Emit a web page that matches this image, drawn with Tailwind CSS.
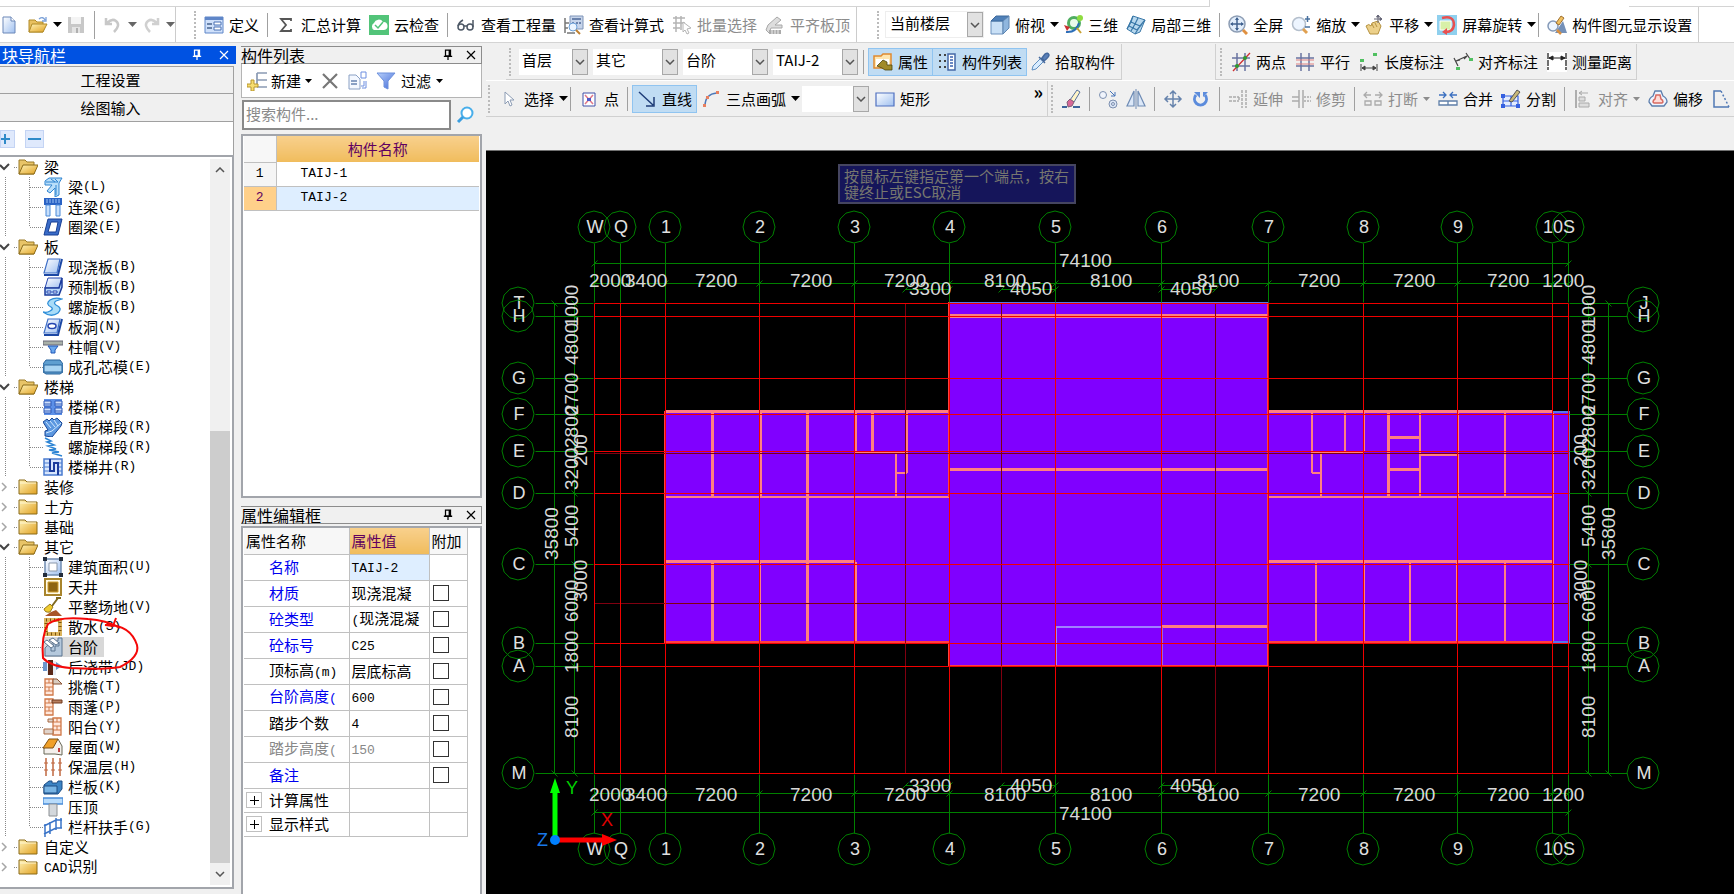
<!DOCTYPE html>
<html lang="zh-CN">

<head>
    <meta charset="UTF-8">
    <meta name="viewport" content="width=device-width, initial-scale=1.0">
    <title>绘图输入</title>
    <script src="https://cdn.jsdelivr.net/npm/@tailwindcss/browser@4"></script>
</head>

<body class="h-screen flex flex-col overflow-hidden bg-[#f0f0f0] text-black text-[15px] leading-5 font-['Noto_Sans_CJK_SC',sans-serif]">
    <!-- 图标 -->
    <svg class="absolute size-0">
        <defs>
            <linearGradient id="gy" x1="0" y1="0" x2="1" y2="1"><stop offset="0" stop-color="#fff3b8" /><stop offset="1" stop-color="#e0a020" /></linearGradient>
            <linearGradient id="gb" x1="0" y1="0" x2="1" y2="1"><stop offset="0" stop-color="#ffffff" /><stop offset="1" stop-color="#9fc0f0" /></linearGradient>
            <linearGradient id="gf" x1="0" y1="0" x2="1" y2="1"><stop offset="0" stop-color="#b8d0fa" /><stop offset="1" stop-color="#3f68d8" /></linearGradient>
        </defs>
        <symbol id="caret" viewBox="0 0 9 5"><path d="M0 0h9L4.500 5z" fill="currentColor" /></symbol>
        <symbol id="down" viewBox="0 0 10 6"><path d="M1 1l4 4 4-4" fill="none" stroke="#555" stroke-width="1.500" /></symbol>
        <symbol id="pin" viewBox="0 0 12 14"><path d="M3 1h6v7H3zM7.500 1v7M1 8.500h10M6 9v4" fill="none" stroke="currentColor" stroke-width="1.500" /></symbol>
        <symbol id="close" viewBox="0 0 10 10"><path d="M1 1l8 8M9 1l-8 8" fill="none" stroke="currentColor" stroke-width="1.200" /></symbol>
        <symbol id="new" viewBox="0 0 20 20"><path d="M3 2h8l4 4v12H3z" fill="url(#gb)" stroke="#6a87b8" /><path d="M11 2v4h4" fill="#fff" stroke="#6a87b8" /></symbol>
        <symbol id="open" viewBox="0 0 20 20"><path d="M1 5h6l2 2h6v10H1z" fill="#e8c060" stroke="#b08a28" /><path d="M4 9h15l-4 8H1z" fill="url(#gy)" stroke="#b08a28" /><path d="M11 4q4-3 6 1M18 2v4h-4" fill="none" stroke="#7aa0d8" stroke-width="1.300" /></symbol>
        <symbol id="save" viewBox="0 0 20 20"><path d="M2 2h16v16H2z" fill="#c8c8c8" /><path d="M5 2h10v7H5z" fill="#f4f4f4" /><path d="M6 12h8v6H6z" fill="#e4e4e4" /><path d="M10 13h2v5h-2z" fill="#b0b0b0" /></symbol>
        <symbol id="undo" viewBox="0 0 20 20"><path d="M3 3v6h6M4 8q5-5 9-2 5 4-2 11" fill="none" stroke="#c8c8c8" stroke-width="2.500" /></symbol>
        <symbol id="redo" viewBox="0 0 20 20"><path d="M17 3v6h-6M16 8q-5-5-9-2-5 4 2 11" fill="none" stroke="#d0d0d0" stroke-width="2.500" /></symbol>
        <symbol id="define" viewBox="0 0 20 20"><path d="M1 2h18v16H1z" fill="#cfe0fa" stroke="#5f86c8" /><path d="M1 2h18v3H1z" fill="#5f86c8" /><path d="M3 9h5M3 13h5" stroke="#47638f" stroke-width="1.500" /><path d="M10 7h7v3h-7zM10 12h7v3h-7z" fill="#fff" stroke="#4871b4" /></symbol>
        <symbol id="sum" viewBox="0 0 20 20"><path d="M15 6V4H5l5 6-5 6h10v-2" fill="none" stroke="#555" stroke-width="1.800" /></symbol>
        <symbol id="cloud" viewBox="0 0 20 20"><path d="M0 0h20v20H0z" fill="#52c479" /><path d="M5 15a4 4 0 0 1 0-7 5 5 0 0 1 9-1 4 4 0 0 1 1 8z" fill="#fff" /><path d="M6 10l3 3 5-6" fill="none" stroke="#52c479" stroke-width="1.500" /></symbol>
        <symbol id="glasses" viewBox="0 0 20 20"><g fill="#fff" stroke="#4d5866" stroke-width="1.500"><circle cx="5" cy="12" r="3" /><circle cx="14" cy="12" r="3" /><path d="M8 11h3M2 11q1-4 5-6M17 12V5" fill="none" /></g></symbol>
        <symbol id="calc" viewBox="0 0 20 20"><path d="M6 1h13v13H6z" fill="#c6d4ea" stroke="#7f94b8" /><path d="M8 3h9v2H8zM8 7h2v2H8zM12 7h2v2h-2zM15 7h2v2h-2z" fill="#6a82ac" /><path d="M1 3v15M1 8h4M1 13h3M3 18h8" stroke="#777" stroke-width="1.500" /><circle cx="9" cy="12" r="4" fill="#eaf4ff" stroke="#6a9fd8" /><path d="M12 15l4 4" stroke="#c08030" stroke-width="2" /></symbol>
        <symbol id="batch" viewBox="0 0 20 20"><path d="M1 3h12M1 8h12M1 13h7M4 1v16M9 1v14" stroke="#b4b4b4" stroke-width="1.500" fill="none" /><path d="M11 7l8 6-4 1 2 4-2 1-2-4-2 2z" fill="#fff" stroke="#b4b4b4" /></symbol>
        <symbol id="align" viewBox="0 0 20 20"><path d="M3 10l9-8 4 3-6 5h7v3H6l-2 5-3-3z" fill="#ddd" stroke="#a8a8a8" /><path d="M4 15h12v4H4z" fill="#aaa" /><path d="M7 15v4M10 15v4M13 15v4" stroke="#eee" /></symbol>
        <symbol id="cube" viewBox="0 0 20 20"><path d="M1 6h12v13H1z" fill="#c9e0f6" stroke="#6a90bc" /><path d="M1 6l5-5h13l-6 5z" fill="#4f80b8" stroke="#3f6a9c" /><path d="M13 6l6-5v12l-6 6z" fill="#8fb6de" stroke="#5c84b0" /></symbol>
        <symbol id="orbit" viewBox="0 0 20 20"><circle cx="11" cy="8" r="7" fill="#4fae60" /><circle cx="11" cy="8" r="4" fill="#eafbea" /><path d="M1 10l6 2-3 4z" fill="#c83030" /><path d="M3 17q10 1 13-9" fill="none" stroke="#2c6eb8" stroke-width="2" /><path d="M14 13l4 5" stroke="#c8a030" stroke-width="2" /><circle cx="17" cy="3" r="3" fill="#8fdc40" /></symbol>
        <symbol id="local" viewBox="0 0 20 20"><path d="M7 1l12 4-5 12-5 2-8-5z" fill="#b8d8ee" stroke="#3a78a8" /><path d="M7 1L5 7l9 4 5-6M14 11l-5 8M5 7l-4 7M12 3L9 9l-4 7M3 11l8 4 5-6" fill="none" stroke="#3a78a8" stroke-width="1.200" /></symbol>
        <symbol id="full" viewBox="0 0 20 20"><circle cx="9" cy="9" r="8" fill="#e2eefc" stroke="#8d9db4" stroke-width="1.500" /><path d="M9 3v12M3 9h12" stroke="#41628f" stroke-width="1.500" /><path d="M9 2l2 3H7zM9 16l2-3H7zM2 9l3-2v4zM16 9l-3-2v4z" fill="#41628f" /><path d="M15 15l4 4" stroke="#e09040" stroke-width="3" /></symbol>
        <symbol id="zoom" viewBox="0 0 20 20"><circle cx="8" cy="9" r="6.500" fill="#edf5ff" stroke="#b4bfcc" stroke-width="1.500" /><path d="M12 14l4 4" stroke="#e0a050" stroke-width="3" /><path d="M14 4h5M16.500 1v6M14 12h5" stroke="#47709f" stroke-width="1.500" /></symbol>
        <symbol id="pan" viewBox="0 0 20 20"><path d="M2 11q3-3 5 0l1-3 6-2 3 5-3 8H6z" fill="#ecd08a" stroke="#b59240" /><path d="M8 9l2 4M11 8l2 4" stroke="#b59240" /><path d="M14 0v8M10 4h8M14 0l-1.500 2h3zM18 4l-2-1.500v3z" stroke="#667" fill="#667" /></symbol>
        <symbol id="spin" viewBox="0 0 20 20"><path d="M0 0h20v20H0z" fill="#8fd0ee" /><path d="M3 6h11v9H3z" fill="#d8f0a8" stroke="#fff" /><path d="M5 3q12-3 12 7-1 7-8 7" fill="none" stroke="#e85050" stroke-width="2.500" /><path d="M10 13v7l-5-3z" fill="#e85050" /></symbol>
        <symbol id="display" viewBox="0 0 20 20"><path d="M8 18l8-12 4 12z" fill="#7490b8" /><circle cx="6" cy="11" r="5" fill="#eef6ff" stroke="#8499b8" stroke-width="1.500" /><path d="M9 8l5-7 3 2-5 7z" fill="#f0c060" stroke="#a07030" /><path d="M10 15l4 4" stroke="#d89040" stroke-width="2.500" /></symbol>
        <symbol id="prop" viewBox="0 0 20 20"><path d="M1 4h7l2-2h8v14H1z" fill="#ffe6b0" stroke="#e08a30" stroke-width="1.500" /><path d="M3 7h13v7H3z" fill="#fff" /><path d="M4 14l6-6 4 2v3h5v5h-7l-3-2z" fill="#a08a28" stroke="#4c4410" stroke-width=".8" /></symbol>
        <symbol id="list" viewBox="0 0 20 20"><path d="M2 3h3M2 9h3M2 15h3M7 3h2M7 9h2M7 15h2" stroke="#444" stroke-width="2" stroke-dasharray="2 1" /><path d="M11 2h7v16h-7z" fill="#fff" stroke="#4468a8" stroke-width="1.500" /><path d="M13 5h3M13 8h3M13 11h3M13 14h3" stroke="#3a62b0" stroke-width="1.500" /></symbol>
        <symbol id="pick" viewBox="0 0 20 20"><path d="M2 18l1-4 8-8 3 3-8 8z" fill="#d8ecff" stroke="#5f8fc0" /><path d="M9 5l6 6M12 6l3-4q3-2 4 1 0 2-5 6z" fill="#5b80b8" stroke="#44689c" stroke-width="1.500" /></symbol>
        <symbol id="cursor" viewBox="0 0 20 20"><path d="M6 3v12l3-3 2 5 2-1-2-5h4z" fill="#fff" stroke="#8c9cb4" /></symbol>
        <symbol id="point" viewBox="0 0 20 20"><path d="M4 4h12v13H4z" fill="#fff" stroke="#4050a8" /><path d="M6 6l8 9M14 6l-8 9" stroke="#e07888" stroke-width="1.500" /><path d="M8 9h4v3H8z" fill="#5058c8" /></symbol>
        <symbol id="line" viewBox="0 0 20 20"><path d="M2 3l14 13M17 8v9H9" fill="none" stroke="#1f3d78" stroke-width="1.500" /></symbol>
        <symbol id="arc" viewBox="0 0 20 20"><path d="M4 17Q4 5 16 4" fill="none" stroke="#4c78b8" stroke-width="1.500" /><path d="M2 15h3v3H2zM5 7h3v3H5zM15 2h3v3h-3z" fill="#e88060" /></symbol>
        <symbol id="rect" viewBox="0 0 20 20"><path d="M1 4h18v13H1z" fill="url(#gb)" stroke="#4f70c0" stroke-width="1.200" /></symbol>
        <symbol id="twopt" viewBox="0 0 20 20"><path d="M6 1v18M14 1v18M1 6h18M1 14h18" stroke="#6873a0" stroke-width="1.500" /><path d="M2 19L19 1" stroke="#d03030" stroke-width="1.300" /><circle cx="6" cy="14" r="2" fill="#2e9a30" /><circle cx="14" cy="6" r="2" fill="#2e9a30" /></symbol>
        <symbol id="parallel" viewBox="0 0 20 20"><path d="M6 1v18M14 1v18M1 6h18M1 14h18" stroke="#6873a0" stroke-width="1.500" /><path d="M1 8h18M1 12h18" stroke="#e08080" stroke-width="1" /></symbol>
        <symbol id="length" viewBox="0 0 20 20"><path d="M2 12v7M18 12v7M3 16h14M3 16l3-2v4zM17 16l-3-2v4z" stroke="#444" fill="#444" /><path d="M1 7h4v3H1zM14 1h4v3h-4z" fill="#50c060" /></symbol>
        <symbol id="aligned" viewBox="0 0 20 20"><path d="M1 6l4 8M13 1l4 6M3 9l11-5M3 9l4-1M14 4l-3 3" stroke="#444" stroke-width="1.200" fill="none" /><path d="M3 15h4v3H3zM16 6h4v3h-4z" fill="#50c060" /></symbol>
        <symbol id="measure" viewBox="0 0 20 20"><path d="M0 0h20v20H0z" fill="#fff" /><path d="M1 1v17M19 1v17" stroke="#222" stroke-width="1.300" stroke-dasharray="6 1" /><path d="M2 6h16M2 6l4-2v4zM18 6l-4-2v4z" stroke="#222" fill="#222" /></symbol>
        <symbol id="brush" viewBox="0 0 20 20"><path d="M9 11l7-10 3 2-6 10z" fill="#fff4c8" stroke="#56719e" /><path d="M6 13l3-3 4 3-2 4-4 1z" fill="#d86898" stroke="#806078" /><path d="M1 18h5M12 18h7" stroke="#3b649c" stroke-width="2" /></symbol>
        <symbol id="copy" viewBox="0 0 20 20"><circle cx="5" cy="6" r="3.500" fill="#f0f4fc" stroke="#7d90b0" /><circle cx="15" cy="15" r="4" fill="#dce6f6" stroke="#7d90b0" /><circle cx="15" cy="15" r="1.500" fill="none" stroke="#7d90b0" /><path d="M12 2l5 5M17 3v4h-4" fill="none" stroke="#4472b8" /></symbol>
        <symbol id="mirror" viewBox="0 0 20 20"><path d="M8 2v15H1zM12 2v15h7z" fill="#dce8f8" stroke="#6e8bb4" stroke-width="1.200" /><path d="M10 0v20" stroke="#6e8bb4" /></symbol>
        <symbol id="move" viewBox="0 0 20 20"><path d="M10 3v14M3 10h14M7 5l3-3 3 3M7 15l3 3 3-3M5 7l-3 3 3 3M15 7l3 3-3 3" fill="none" stroke="#6683ac" stroke-width="1.500" /></symbol>
        <symbol id="rotate" viewBox="0 0 20 20"><path d="M5 6a6 6 0 1 0 9 0" fill="none" stroke="#5c8cdc" stroke-width="3" /><path d="M3 3h6v6zM12 8V3h5z" fill="#5c8cdc" /></symbol>
        <symbol id="extend" viewBox="0 0 20 20"><path d="M1 8h10M1 12h10M11 8v4M14 1v18M18 1v18" stroke="#aaa" stroke-width="1.500" stroke-dasharray="3 1" /></symbol>
        <symbol id="trim" viewBox="0 0 20 20"><path d="M1 8h7M1 12h7M8 1v18M12 1v18" stroke="#aaa" stroke-width="1.500" /><path d="M13 8h7M13 12h7" stroke="#aaa" stroke-width="1.500" stroke-dasharray="2 1" /></symbol>
        <symbol id="break" viewBox="0 0 20 20"><path d="M1 6h7M12 6h7M4 3L1 6l3 3M16 3l3 3-3 3M2 12h6v4H2zM12 12h6v4h-6z" fill="none" stroke="#aaa" stroke-width="1.300" /></symbol>
        <symbol id="merge" viewBox="0 0 20 20"><path d="M1 6h7M12 6h7M5 3l3 3-3 3M15 3l-3 3 3 3" fill="none" stroke="#3c70c0" stroke-width="1.300" /><path d="M1 12h18v4H1zM10 12v4" fill="#fff" stroke="#5d7ea8" stroke-width="1.300" /></symbol>
        <symbol id="split" viewBox="0 0 20 20"><path d="M2 7h15v10H2zM10 7v10M2 12h15" fill="#e4edff" stroke="#3560e0" stroke-width="1.200" /><path d="M0 5h4v4H0zM0 15h4v4H0zM15 15h4v4h-4z" fill="#3560e0" /><path d="M8 12l8-11 3 2-8 10z" fill="#c8b878" stroke="#555" /></symbol>
        <symbol id="justify" viewBox="0 0 20 20"><path d="M3 1v18" stroke="#999" stroke-width="1.500" /><path d="M6 8h6v4H6zM6 14h10v4H6zM6 4h9M9 2L6 4l3 2" fill="#ddd" stroke="#aaa" /></symbol>
        <symbol id="offset" viewBox="0 0 20 20"><path d="M7 2h6l2 5q4 2 4 6l-3 4H4l-3-4q0-4 4-6z" fill="#eef4ff" stroke="#5b7dac" stroke-width="1.300" /><path d="M8 6h4l1 4q2 1 2 3l-1 1H6l-1-1q0-2 2-3z" fill="#ffdcd8" stroke="#d86a60" stroke-width="1.500" /></symbol>
        <symbol id="stretch" viewBox="0 0 20 20"><path d="M10 2H3v16h15" fill="none" stroke="#5078b4" stroke-width="1.500" /><path d="M10 2l8 16" stroke="#5078b4" stroke-dasharray="2 2" stroke-width="1.500" /></symbol>
        <symbol id="add" viewBox="0 0 20 20"><path d="M10 2h10M10 9h10M10 16h10M10 2v14" stroke="#8a9ab4" stroke-width="1.700" fill="none" /><path d="M4 9h3v4h4v3H7v4H4v-4H0v-3h4z" fill="#f6dc70" stroke="#b8962c" /></symbol>
        <symbol id="del" viewBox="0 0 20 20"><path d="M3 3l14 14M17 3L3 17" stroke="#777" stroke-width="2.200" /></symbol>
        <symbol id="dup" viewBox="0 0 20 20"><path d="M1 4h7l4 4v10H1z" fill="#f4f8ff" stroke="#8aa0c4" /><path d="M3 10h6M3 13h6" stroke="#8aa0c4" stroke-width="2" /><path d="M13 1h5v6h-5zM16 10v5h-3M18 10v7h-4" fill="none" stroke="#6d8ee0" /></symbol>
        <symbol id="filter" viewBox="0 0 20 20"><path d="M1 2h18l-7 8v8l-4-2v-6z" fill="url(#gf)" stroke="#6c90dc" /></symbol>
        <symbol id="search" viewBox="0 0 20 20"><circle cx="11" cy="8" r="5.500" fill="#fff" stroke="#48aeea" stroke-width="2" /><path d="M7 12l-5 5" stroke="#3a9ee0" stroke-width="3" /></symbol>
        <!-- 构件树图标 -->
        <symbol id="t-open" viewBox="0 0 20 18"><path d="M1 2h6l2 2h7v12H1z" fill="#e8c468" stroke="#9a7a28" /><path d="M5 7h15l-4 9H1z" fill="url(#gy)" stroke="#8a6a18" /></symbol>
        <symbol id="t-dir" viewBox="0 0 20 18"><path d="M1 2h6l2 2h10v12H1z" fill="url(#gy)" stroke="#8a6a18" /><path d="M2 5h16" stroke="#fff6d0" /></symbol>
        <symbol id="t-beam" viewBox="0 0 20 20"><path d="M2 4l4-3h13l-3 5v12l-4 2v-9l-5 5-3-2 5-6H2z" fill="#b8defa" stroke="#2f84d0" /><path d="M3 5h12M8 2l4 3M12 2l3 3M13 8v10" stroke="#2f84d0" /></symbol>
        <symbol id="t-link" viewBox="0 0 20 20"><path d="M1 1h18v7H1z" fill="#2a62c4" /><path d="M3 3h14M3 5h14" stroke="#9cc4f6" stroke-dasharray="2 1" /><path d="M3 8h4v11H3zM13 8h4v11h-4z" fill="#c8e0fc" stroke="#4b8ad8" /></symbol>
        <symbol id="t-ring" viewBox="0 0 20 20"><path d="M5 2h14l-4 16H1z" fill="#3a6cc8" stroke="#173f94" /><path d="M8 5h7l-2 10H5z" fill="#fff" stroke="#173f94" /></symbol>
        <symbol id="t-slab" viewBox="0 0 20 20"><path d="M5 2h12l-3 14H1z" fill="url(#gb)" stroke="#3f70c8" stroke-width="1.200" /><path d="M1 18h14l4-16" stroke="#1c48a4" stroke-width="2" fill="none" /></symbol>
        <symbol id="t-pre" viewBox="0 0 20 20"><path d="M5 1h14l-3 10H2z" fill="url(#gb)" stroke="#2546b0" /><path d="M2 11h14l3-10v9l-3 8H2z" fill="#b8d8fa" stroke="#1c3c9c" stroke-width="1.500" /><path d="M4 14h4v2H4zM10 14h4v2h-4z" fill="#fff" stroke="#2546b0" /></symbol>
        <symbol id="t-spiral" viewBox="0 0 20 20"><path d="M19 2Q12 0 7 3q-5 4 1 7 3 2-1 4-3 2-7 1 8 6 15 1 5-5-2-8-3-2 0-4z" fill="#a8dcf8" stroke="#2f8ed8" stroke-width="1.300" /></symbol>
        <symbol id="t-hole" viewBox="0 0 20 20"><path d="M5 2h12l-3 14H1z" fill="url(#gb)" stroke="#3f70c8" stroke-width="1.200" /><path d="M1 18h14l4-16" stroke="#1c48a4" stroke-width="2" fill="none" /><ellipse cx="9" cy="9" rx="4" ry="2.500" fill="#fff" stroke="#2546b0" stroke-width="1.500" /></symbol>
        <symbol id="t-cap" viewBox="0 0 20 20"><path d="M0 4h20v4H0z" fill="#a8b0a8" stroke="#667" /><path d="M5 9h10l-3 4v3H8v-3z" fill="#6aa8ee" stroke="#2258b8" /></symbol>
        <symbol id="t-core" viewBox="0 0 20 20"><path d="M3 3h14l3 4v8l-3 2H3l-3-2V7z" fill="#5f9fd0" stroke="#2a649c" /><path d="M1 8h18v7H1z" fill="#a8d4f2" stroke="#2a649c" /></symbol>
        <symbol id="t-stair" viewBox="0 0 20 20"><path d="M1 2h18v16H1z" fill="#5c90e8" /><path d="M1 4h7v5H1zM12 4h7v5h-7zM1 11h7v5H1zM12 11h7v5h-7z" fill="#cfe0fc" stroke="#2c58b8" /><path d="M1 7h7M12 7h7M1 14h7M12 14h7" stroke="#2c58b8" /></symbol>
        <symbol id="t-flight" viewBox="0 0 20 20"><path d="M0 5l4-3 2 2 3-3 2 2 3-2 5 5-1 3-9 11-7-1v-5l3-1z" fill="#5c98e0" stroke="#1a4898" /><path d="M3 5l5 6M7 4l5 6M11 3l4 6M3 16l6-2 9-8" stroke="#d0e8ff" fill="none" /></symbol>
        <symbol id="t-zig" viewBox="0 0 20 20"><path d="M2 1l6 3-4 1 7 3-6 1 8 3-7 1 10 2-7 1 10 3" fill="none" stroke="#2c84d4" stroke-width="1.500" /></symbol>
        <symbol id="t-well" viewBox="0 0 20 20"><path d="M1 2h18v16H1z" fill="#d8e6fc" stroke="#4b7cd0" stroke-width="1.500" /><path d="M1 6h5M1 10h5M1 14h5M15 6h4M15 10h4M15 14h4" stroke="#4b7cd0" /><path d="M7 2v12h4V6h4v12" fill="none" stroke="#1c3c9c" stroke-width="2" /></symbol>
        <symbol id="t-area" viewBox="0 0 20 20"><path d="M2 2h16v16H2z" fill="url(#gb)" stroke="#6f8ab0" stroke-width="1.500" /><path d="M6 6h8v8H6z" fill="#fff" stroke="#8a97aa" /><path d="M0 0h4v4H0zM16 0h4v4h-4zM0 16h4v4H0zM16 16h4v4h-4z" fill="#222c3c" /></symbol>
        <symbol id="t-court" viewBox="0 0 20 20"><path d="M2 2h16v16H2z" fill="#fffbe8" stroke="#a8842c" stroke-width="2" /><path d="M5 5h10v10H5z" fill="#8e6510" stroke="#d0a030" /></symbol>
        <symbol id="t-site" viewBox="0 0 20 20"><path d="M9 9l6-8M13 1h5" stroke="#806a20" stroke-width="2" /><path d="M1 12l6-5 3 3-3 5q-5 1-6-3z" fill="#f0cc30" stroke="#98781c" /><path d="M2 19l6-4 5-2 6 6z" fill="#a85428" /></symbol>
        <symbol id="t-apron" viewBox="0 0 20 20"><path d="M3 3h14v14H3z" fill="#fff" stroke="#dcb45c" stroke-width="4" /><path d="M3 3h14v14H3z" fill="none" stroke="#76510c" stroke-width="3" stroke-dasharray="1 3" /></symbol>
        <symbol id="t-step" viewBox="0 0 20 20"><path d="M6 7h5V4h4V1h4v18H2v-8z" fill="#b4c8dc" stroke="#5b7490" /><path d="M1 5l7 6 3-2-7-6zM6 3l7 5 3-2-6-5z" fill="#fff" stroke="#5b7490" /><path d="M8 11v3h4v-5h4V5" fill="none" stroke="#5b7490" /></symbol>
        <symbol id="t-post" viewBox="0 0 20 20"><path d="M0 5h6v9H0zM13 5l6 4-6 4z" fill="#6d96cc" /><path d="M4 4h9v14H4z" fill="#e8eef6" /><path d="M5 3h5v15H5z" fill="#5a2818" /></symbol>
        <symbol id="t-eave" viewBox="0 0 20 20"><path d="M2 2h8v16H2z" fill="#ffe8dc" stroke="#d07848" stroke-width="1.300" /><path d="M2 6h8M2 10h8M2 14h8M6 2v4M6 10v4" stroke="#d07848" /><path d="M10 2h4l5 5h-9z" fill="#d8ccc0" stroke="#8a5030" /></symbol>
        <symbol id="t-canopy" viewBox="0 0 20 20"><path d="M2 2h8v16H2z" fill="#ffe8dc" stroke="#d07848" stroke-width="1.300" /><path d="M2 6h8M2 10h8M2 14h8M6 2v4M6 10v4" stroke="#d07848" /><path d="M9 3h10v3H9z" fill="#b88060" stroke="#70381c" /></symbol>
        <symbol id="t-balcony" viewBox="0 0 20 20"><path d="M10 1h8v17h-8z" fill="#ffe8dc" stroke="#d07848" stroke-width="1.300" /><path d="M10 5h8M10 9h8M10 13h8M14 1v4M14 9v4" stroke="#d07848" /><path d="M5 2h5v3H5zM1 12h9v5H1z" fill="#e0d4cc" stroke="#a86840" /></symbol>
        <symbol id="t-roof" viewBox="0 0 20 20"><path d="M1 11v6h11l7 1V9l-4-7z" fill="#f4f0ec" stroke="#665" /><path d="M6 2h9l-5 9H0z" fill="#f0a028" stroke="#805010" /><path d="M15 11h2v4h-2z" fill="#c04040" /></symbol>
        <symbol id="t-insul" viewBox="0 0 20 20"><path d="M3 1v18M10 1v18M17 1v18" stroke="#c06840" stroke-width="1.500" /><path d="M1 6h4M8 6h4M15 6h4M1 13h4M8 13h4M15 13h4" stroke="#c06840" /></symbol>
        <symbol id="t-rail" viewBox="0 0 20 20"><path d="M1 8l5-4h3v2h5l1-2h4v8l-4 5H1z" fill="#3c84c4" stroke="#1c4c84" /><path d="M1 9h13v7H1z" fill="#78b4e4" stroke="#1c4c84" /></symbol>
        <symbol id="t-coping" viewBox="0 0 20 20"><path d="M0 1h20v6H0z" fill="#b8dcfc" stroke="#4a8cd8" stroke-width="1.300" /><path d="M6 7h8v12H6z" fill="#d4d8dc" stroke="#8c9094" /></symbol>
        <symbol id="t-hand" viewBox="0 0 20 20"><path d="M1 9l12-6h6M1 17l12-6h6M2 7v13M7 5v12M13 1v12M18 1v10" fill="none" stroke="#3a74c8" stroke-width="1.500" /></symbol>
    </svg>

    <!-- 顶部细条 -->
    <div class="h-[7px] shrink-0 flex justify-between bg-white">
        <div class="w-[1210px] border-b border-r border-[#d4d4d4]"></div>
        <div class="w-[105px] border-b border-[#d4d4d4]"></div>
    </div>

    <!-- 主工具栏 -->
    <header class="h-[36px] shrink-0 flex items-center bg-white border-b border-[#d4d4d4] whitespace-nowrap">
        <div class="w-[176px] h-full shrink-0 flex items-center border-r border-[#ccc]">
            <button aria-label="新建工程"><svg class="size-5"><use href="#new" /></svg></button>
            <button aria-label="打开" class="ml-2 flex items-center gap-[5px]"><svg class="size-5"><use href="#open" /></svg><svg class="w-[9px] h-[5px]"><use href="#caret" /></svg></button>
            <button aria-label="保存" class="ml-1"><svg class="size-5"><use href="#save" /></svg></button>
            <i class="ml-2 w-px h-7 bg-[#a0a0a0]"></i>
            <button aria-label="撤销" class="ml-2 flex items-center gap-[5px] text-[#666]"><svg class="size-5"><use href="#undo" /></svg><svg class="w-[9px] h-[5px]"><use href="#caret" /></svg></button>
            <button aria-label="恢复" class="ml-1 flex items-center gap-[5px] text-[#666]"><svg class="size-5"><use href="#redo" /></svg><svg class="w-[9px] h-[5px]"><use href="#caret" /></svg></button>
        </div>
        <div class="h-full shrink-0 flex items-center gap-2 pl-[18px] pr-1.5 border-r border-[#ccc]">
            <i class="h-7 border-l-2 border-dotted border-[#bbb]"></i>
            <button class="flex items-center gap-[5px]"><svg class="size-5"><use href="#define" /></svg>定义</button>
            <i class="w-px h-6 bg-[#a0a0a0]"></i>
            <button class="flex items-center gap-[5px]"><svg class="size-5"><use href="#sum" /></svg>汇总计算</button>
            <button class="flex items-center gap-[5px]"><svg class="size-5"><use href="#cloud" /></svg>云检查</button>
            <i class="w-px h-6 bg-[#a0a0a0]"></i>
            <button class="flex items-center gap-[5px]"><svg class="size-5"><use href="#glasses" /></svg>查看工程量</button>
            <button class="flex items-center gap-[5px]"><svg class="size-5"><use href="#calc" /></svg>查看计算式</button>
            <button class="flex items-center gap-[5px] text-[#8c8c8c]"><svg class="size-5"><use href="#batch" /></svg>批量选择</button>
            <button class="flex items-center gap-[5px] text-[#8c8c8c]"><svg class="size-5"><use href="#align" /></svg>平齐板顶</button>
        </div>
        <div class="h-full shrink-0 flex items-center pl-5 pr-1.5 border-r border-[#ccc]">
            <i class="h-7 border-l-2 border-dotted border-[#bbb]"></i>
            <div class="ml-1.5 w-[99px] h-[27px] flex border border-[#eee] bg-white">
                <select aria-label="楼层范围" class="appearance-none grow min-w-0 pl-1 pb-1"><option>当前楼层</option></select>
                <span class="w-4 flex items-center justify-center border border-[#a8a8a8] bg-[#e1e1e1]"><svg class="w-[10px] h-[6px]"><use href="#down" /></svg></span>
            </div>
            <button class="ml-1.5 flex items-center gap-[5px]"><svg class="size-5"><use href="#cube" /></svg>俯视<svg class="w-[9px] h-[5px]"><use href="#caret" /></svg></button>
            <button class="ml-1 flex items-center gap-[5px]"><svg class="size-5"><use href="#orbit" /></svg>三维</button>
            <button class="ml-2 flex items-center gap-[5px]"><svg class="size-5"><use href="#local" /></svg>局部三维</button>
            <i class="mx-2 w-px h-6 bg-[#a0a0a0]"></i>
            <button class="flex items-center gap-[5px]"><svg class="size-5"><use href="#full" /></svg>全屏</button>
            <button class="ml-2 flex items-center gap-[5px]"><svg class="size-5"><use href="#zoom" /></svg>缩放<svg class="w-[9px] h-[5px]"><use href="#caret" /></svg></button>
            <button class="ml-1 flex items-center gap-[5px]"><svg class="size-5"><use href="#pan" /></svg>平移<svg class="w-[9px] h-[5px]"><use href="#caret" /></svg></button>
            <button class="ml-1 flex items-center gap-[5px]"><svg class="size-5"><use href="#spin" /></svg>屏幕旋转<svg class="w-[9px] h-[5px]"><use href="#caret" /></svg></button>
            <i class="ml-0.5 mr-2 w-px h-6 bg-[#a0a0a0]"></i>
            <button class="flex items-center gap-[5px]"><svg class="size-5"><use href="#display" /></svg>构件图元显示设置</button>
        </div>
    </header>

    <div class="grow min-h-0 flex">
        <!-- 模块导航栏 -->
        <aside class="relative w-[236px] shrink-0 flex flex-col pt-[3px] pb-[5px]">
            <div class="h-[18px] flex items-center pl-0.5 pr-[7px] bg-[#0052e2] text-white text-[16px]">
                <h2 class="grow">块导航栏</h2>
                <svg class="w-[10px] h-3 mr-[17px]"><use href="#pin" /></svg>
                <svg class="size-[10px]"><use href="#close" /></svg>
            </div>
            <button class="h-7 mt-0.5 mr-0.5 pr-3 border-t border-r border-b border-[#a0a0a0]">工程设置</button>
            <button class="h-7 mr-0.5 pr-3 border-r border-b border-[#a0a0a0]">绘图输入</button>
            <div class="h-[33px] mr-0.5 flex items-center gap-[10px] bg-white border-r border-[#a0a0a0]">
                <button aria-label="展开" class="w-[15px] h-[18px] flex items-center bg-[#dfe9fc] border border-[#c4d4f4]"><svg class="size-[13px]" viewBox="0 0 13 13"><path d="M0 7h9M4 2v10" stroke="#2f8ac8" stroke-width="2" /></svg></button>
                <button aria-label="折叠" class="w-[19px] h-[18px] flex items-center justify-center bg-[#dfe9fc] border border-[#c4d4f4]"><svg class="size-[13px]" viewBox="0 0 13 13"><path d="M0 7h13" stroke="#2f8ac8" stroke-width="2" /></svg></button>
            </div>
            <div class="grow min-h-0 mr-0.5 flex bg-white border-t-2 border-r-2 border-b-2 border-[#a2a5ab]">
                <ul id="tree" class="grow min-w-0 overflow-hidden whitespace-nowrap"></ul>
                <div class="w-5 my-0.5 mr-0.5 shrink-0 flex flex-col items-center bg-[#f0f0f0]">
                    <svg class="w-[10px] h-[6px] mt-2 rotate-180"><use href="#down" /></svg>
                    <div class="h-[258px]"></div>
                    <div class="grow w-full bg-[#cdcdcd]"></div>
                    <svg class="w-[10px] h-[6px] my-2"><use href="#down" /></svg>
                </div>
            </div>
            <!-- 手绘圈注 -->
            <svg class="absolute left-[38px] top-[570px] w-[104px] h-[100px] pointer-events-none" viewBox="38 613 104 100"><path d="M116 618l-3 8-8-1q25-1 32 20 3 12-17 22-16 3-50 1-20-2-27-10-2-22 5-34 10-8 40-5 18 1 32 9" fill="none" stroke="#f50808" stroke-width="2" /></svg>
        </aside>

        <!-- 构件列表 / 属性编辑框 -->
        <section class="ml-[5px] w-[241px] shrink-0 flex flex-col pt-[3px]">
            <div class="h-[18px] flex items-center pr-[5px] border-t border-r border-b border-[#8c8c8c] text-[16px]">
                <h2 class="grow">构件列表</h2>
                <svg class="w-[10px] h-3 mr-[13px]"><use href="#pin" /></svg>
                <svg class="size-[10px]"><use href="#close" /></svg>
            </div>
            <div class="h-[34px] flex items-center pl-[5px] bg-white border-l border-r border-b border-[#b4b4b4]">
                <button class="flex items-center gap-1"><svg class="size-5"><use href="#add" /></svg>新建<svg class="w-[7px] h-1"><use href="#caret" /></svg></button>
                <button aria-label="删除" class="ml-2"><svg class="size-5"><use href="#del" /></svg></button>
                <button aria-label="复制" class="ml-2"><svg class="size-5"><use href="#dup" /></svg></button>
                <button class="ml-2 flex items-center gap-[5px]"><svg class="size-5"><use href="#filter" /></svg>过滤<svg class="w-[7px] h-1"><use href="#caret" /></svg></button>
            </div>
            <div class="h-[34px] flex items-center pl-px">
                <input type="text" aria-label="搜索构件" placeholder="搜索构件..." class="w-[209px] h-[30px] pl-0.5 pb-1 bg-white border-2 border-[#8a8a8a] placeholder:text-[#8a8a8a]">
                <button aria-label="搜索" class="ml-[5px]"><svg class="size-5"><use href="#search" /></svg></button>
            </div>
            <div class="h-[364px] mt-0.5 pl-px pr-px bg-white border-2 border-[#a2a5ab]">
                <table class="w-full border-collapse table-fixed">
                    <thead>
                        <tr class="h-[26px]">
                            <th class="w-8 border-b border-r border-[#c0c0c0] bg-[#f7f7f7]"></th>
                            <th class="font-normal text-[#600060] bg-linear-to-b from-[#f8d08c] to-[#f0bc5c]">构件名称</th>
                        </tr>
                    </thead>
                    <tbody class="font-mono text-[13px]">
                        <tr class="h-6 border-b border-[#c0c0c0]">
                            <td class="text-center border-r border-[#c0c0c0] bg-[#f5f5f5]">1</td>
                            <td class="pl-6">TAIJ-1</td>
                        </tr>
                        <tr class="h-6 border-b border-[#c0c0c0]">
                            <td class="text-center border-r border-[#c0c0c0] bg-[#ffd08a] text-[#600060]">2</td>
                            <td class="pl-6 bg-[#deeeff]">TAIJ-2</td>
                        </tr>
                    </tbody>
                </table>
            </div>
            <div class="h-[18px] mt-2 flex items-center pr-[5px] border-t border-r border-b border-[#8c8c8c] text-[16px]">
                <h2 class="grow">属性编辑框</h2>
                <svg class="w-[10px] h-3 mr-[13px]"><use href="#pin" /></svg>
                <svg class="size-[10px]"><use href="#close" /></svg>
            </div>
            <div class="grow min-h-0 mt-0.5 pl-px bg-white border-t-2 border-l-2 border-r-2 border-[#a2a5ab] overflow-hidden">
                <table class="w-[224px] border-collapse table-fixed whitespace-nowrap">
                    <thead>
                        <tr class="h-[26px] text-left">
                            <th class="w-[105px] pl-0.5 font-normal border-r border-b border-[#c0c0c0] bg-[#f7f7f7]">属性名称</th>
                            <th class="w-20 pl-0.5 font-normal border-r border-b border-[#c0c0c0] text-[#600060] bg-linear-to-b from-[#f8d08c] to-[#f0bc5c]">属性值</th>
                            <th class="pl-0.5 font-normal border-r border-b border-[#c0c0c0] bg-[#f7f7f7]">附加</th>
                        </tr>
                    </thead>
                    <tbody id="props"></tbody>
                </table>
            </div>
        </section>

        <!-- 绘图区 -->
        <main class="ml-1 grow min-w-0 flex flex-col">
            <div class="h-[38px] pt-px pl-5 shrink-0 flex border-b border-white whitespace-nowrap">
                <div class="shrink-0 flex items-center pl-[3px] pr-1.5 border-r border-b border-[#d0d0d0]">
                    <i class="h-7 border-l-2 border-dotted border-[#bbb]"></i>
                    <div class="ml-2 w-[69px] h-[26px] flex bg-white">
                        <select aria-label="楼层" class="appearance-none grow min-w-0 pl-[3px] pb-1"><option>首层</option></select>
                        <span class="w-4 flex items-center justify-center border border-[#a8a8a8] bg-[#e1e1e1]"><svg class="w-[10px] h-[6px]"><use href="#down" /></svg></span>
                    </div>
                    <div class="ml-[5px] w-[85px] h-[26px] flex bg-white">
                        <select aria-label="构件大类" class="appearance-none grow min-w-0 pl-[3px] pb-1"><option>其它</option></select>
                        <span class="w-4 flex items-center justify-center border border-[#a8a8a8] bg-[#e1e1e1]"><svg class="w-[10px] h-[6px]"><use href="#down" /></svg></span>
                    </div>
                    <div class="ml-[5px] w-[85px] h-[26px] flex bg-white">
                        <select aria-label="构件类型" class="appearance-none grow min-w-0 pl-[3px] pb-1"><option>台阶</option></select>
                        <span class="w-4 flex items-center justify-center border border-[#a8a8a8] bg-[#e1e1e1]"><svg class="w-[10px] h-[6px]"><use href="#down" /></svg></span>
                    </div>
                    <div class="ml-[5px] w-[85px] h-[26px] flex bg-white">
                        <select aria-label="构件" class="appearance-none grow min-w-0 pl-[3px] pb-1"><option>TAIJ-2</option></select>
                        <span class="w-4 flex items-center justify-center border border-[#a8a8a8] bg-[#e1e1e1]"><svg class="w-[10px] h-[6px]"><use href="#down" /></svg></span>
                    </div>
                    <i class="ml-[5px] mr-1 w-px h-6 bg-[#a0a0a0]"></i>
                    <button class="h-7 px-1 flex items-center gap-[5px] border border-[#90c4f0] bg-[#c0dcf3]"><svg class="size-5"><use href="#prop" /></svg>属性</button>
                    <button class="h-7 px-1 flex items-center gap-[5px] border border-l-0 border-[#90c4f0] bg-[#c0dcf3]"><svg class="size-5"><use href="#list" /></svg>构件列表</button>
                    <button class="ml-[3px] flex items-center gap-[5px]"><svg class="size-5"><use href="#pick" /></svg>拾取构件</button>
                </div>
                <div class="ml-[93px] shrink-0 flex items-center gap-[9px] px-1 border-l border-r border-b border-[#d0d0d0]">
                    <i class="h-7 border-l-2 border-dotted border-[#bbb]"></i>
                    <button class="flex items-center gap-[5px]"><svg class="size-5"><use href="#twopt" /></svg>两点</button>
                    <button class="flex items-center gap-[5px]"><svg class="size-5"><use href="#parallel" /></svg>平行</button>
                    <button class="flex items-center gap-[5px]"><svg class="size-5"><use href="#length" /></svg>长度标注</button>
                    <button class="flex items-center gap-[5px]"><svg class="size-5"><use href="#aligned" /></svg>对齐标注</button>
                    <button class="flex items-center gap-[5px]"><svg class="size-5"><use href="#measure" /></svg>测量距离</button>
                </div>
            </div>
            <div class="h-[36px] shrink-0 flex border-b border-[#d0d0d0] whitespace-nowrap overflow-hidden">
                <div class="w-[562px] shrink-0 flex items-center pl-0.5 border-r border-[#d0d0d0]">
                    <i class="h-7 border-l-2 border-dotted border-[#bbb]"></i>
                    <button class="ml-[9px] flex items-center gap-[5px]"><svg class="size-5"><use href="#cursor" /></svg>选择<svg class="w-[9px] h-[5px]"><use href="#caret" /></svg></button>
                    <i class="ml-0.5 w-px h-6 bg-[#a0a0a0]"></i>
                    <button class="ml-2 flex items-center gap-[5px]"><svg class="size-5"><use href="#point" /></svg>点</button>
                    <i class="ml-2 mr-1 w-px h-6 bg-[#a0a0a0]"></i>
                    <button class="h-7 px-1 flex items-center gap-[5px] border border-[#90c4f0] bg-[#c0dcf3]"><svg class="size-5"><use href="#line" /></svg>直线</button>
                    <button class="ml-1 flex items-center gap-[5px]"><svg class="size-5"><use href="#arc" /></svg>三点画弧<svg class="w-[9px] h-[5px]"><use href="#caret" /></svg></button>
                    <div class="ml-0.5 w-[67px] h-[26px] flex bg-white">
                        <select aria-label="半径" class="appearance-none grow min-w-0"><option></option></select>
                        <span class="w-4 flex items-center justify-center border border-[#a8a8a8] bg-[#e1e1e1]"><svg class="w-[10px] h-[6px]"><use href="#down" /></svg></span>
                    </div>
                    <button class="ml-1.5 flex items-center gap-[5px]"><svg class="size-5"><use href="#rect" /></svg>矩形</button>
                    <button aria-label="更多" class="ml-auto mr-1 pb-4 font-bold text-[18px]">»</button>
                </div>
                <div class="shrink-0 flex items-center gap-2 pl-[3px]">
                    <i class="h-7 border-l-2 border-dotted border-[#bbb]"></i>
                    <button aria-label="删除图元"><svg class="size-5"><use href="#brush" /></svg></button>
                    <i class="w-px h-6 bg-[#a0a0a0]"></i>
                    <button aria-label="复制图元"><svg class="size-5"><use href="#copy" /></svg></button>
                    <button aria-label="镜像"><svg class="size-5"><use href="#mirror" /></svg></button>
                    <i class="w-px h-6 bg-[#a0a0a0]"></i>
                    <button aria-label="移动"><svg class="size-5"><use href="#move" /></svg></button>
                    <button aria-label="旋转"><svg class="size-5"><use href="#rotate" /></svg></button>
                    <i class="w-px h-6 bg-[#a0a0a0]"></i>
                    <button class="flex items-center gap-[5px] text-[#8c8c8c]"><svg class="size-5"><use href="#extend" /></svg>延伸</button>
                    <button class="flex items-center gap-[5px] text-[#8c8c8c]"><svg class="size-5"><use href="#trim" /></svg>修剪</button>
                    <i class="w-px h-6 bg-[#a0a0a0]"></i>
                    <button class="flex items-center gap-[5px] text-[#8c8c8c]"><svg class="size-5"><use href="#break" /></svg>打断<svg class="w-[7px] h-1"><use href="#caret" /></svg></button>
                    <button class="flex items-center gap-[5px]"><svg class="size-5"><use href="#merge" /></svg>合并</button>
                    <button class="flex items-center gap-[5px]"><svg class="size-5"><use href="#split" /></svg>分割</button>
                    <i class="w-px h-6 bg-[#a0a0a0]"></i>
                    <button class="flex items-center gap-[5px] text-[#8c8c8c]"><svg class="size-5"><use href="#justify" /></svg>对齐<svg class="w-[7px] h-1"><use href="#caret" /></svg></button>
                    <button class="flex items-center gap-[5px]"><svg class="size-5"><use href="#offset" /></svg>偏移</button>
                    <button aria-label="拉伸"><svg class="size-5"><use href="#stretch" /></svg></button>
                </div>
            </div>
            <div class="relative grow min-h-0 mt-[33px] bg-black border-t border-[#707070] overflow-hidden">
                <svg id="plan" class="block w-full h-full font-['Liberation_Sans',sans-serif]" viewBox="486 151 1248 743" preserveAspectRatio="xMinYMin slice"></svg>
                <p class="absolute left-[352px] top-[13px] w-[238px] pl-1 py-0.5 bg-[#15155a] border-2 border-[#454560] text-[#77776f] leading-4">按鼠标左键指定第一个端点，按右<br>键终止或ESC取消</p>
            </div>
        </main>
    </div>

    <script>
        // 把括号、字母换成等宽小字
        function label(s) {
            return s.replace(/[A-Za-z0-9()\-]+/g, '<span class="font-mono text-[13px]">$&</span>');
        }

        // 构件树
        const tree = [
            ['梁', [['beam', '梁(L)'], ['link', '连梁(G)'], ['ring', '圈梁(E)']]],
            ['板', [['slab', '现浇板(B)'], ['pre', '预制板(B)'], ['spiral', '螺旋板(B)'], ['hole', '板洞(N)'], ['cap', '柱帽(V)'], ['core', '成孔芯模(E)']]],
            ['楼梯', [['stair', '楼梯(R)'], ['flight', '直形梯段(R)'], ['zig', '螺旋梯段(R)'], ['well', '楼梯井(R)']]],
            ['装修'], ['土方'], ['基础'],
            ['其它', [['area', '建筑面积(U)'], ['court', '天井'], ['site', '平整场地(V)'], ['apron', '散水(S)'], ['step', '台阶'], ['post', '后浇带(JD)'], ['eave', '挑檐(T)'], ['canopy', '雨蓬(P)'], ['balcony', '阳台(Y)'], ['roof', '屋面(W)'], ['insul', '保温层(H)'], ['rail', '栏板(K)'], ['coping', '压顶'], ['hand', '栏杆扶手(G)']]],
            ['自定义'], ['CAD识别']
        ];
        let rows = '';
        for (const [name, kids] of tree) {
            const arrow = kids ? '<path d="M0 8l4 4 5-5" fill="none" stroke="#444" stroke-width="2"/>' : '<path d="M2 6l4 4-4 4" fill="none" stroke="#a6a6a6" stroke-width="1.500"/>';
            rows += `<li class="h-5 flex items-center"><svg class="w-[18px] h-5 shrink-0">${arrow}<path d="M14 10.500h4" stroke="#888" stroke-dasharray="1 1"/></svg><svg class="w-5 h-[18px] shrink-0"><use href="${kids ? '#t-open' : '#t-dir'}"/></svg><span class="ml-1.5">${label(name)}</span></li>`;
            (kids || []).forEach(([icon, text], i) => {
                const end = i == kids.length - 1 ? 10 : 20;
                const sel = text == '台阶' ? 'bg-[#d8d8d8]' : '';
                rows += `<li class="h-5 flex items-center"><svg class="w-[43px] h-5 shrink-0"><path d="M5.500 0v20M29.500 0v${end}M30 10.500h13" fill="none" stroke="#888" stroke-dasharray="1 1"/></svg><span class="h-5 flex items-center pr-1.5 ${sel}"><svg class="size-5 mr-[5px] shrink-0"><use href="#t-${icon}"/></svg>${label(text)}</span></li>`;
            });
        }
        document.getElementById('tree').innerHTML = rows;

        // 属性表
        const props = [
            ['名称', 'TAIJ-2', 'text-[#0000f0]'], ['材质', '现浇混凝', 'text-[#0000f0]'], ['砼类型', '(现浇混凝', 'text-[#0000f0]'],
            ['砼标号', 'C25', 'text-[#0000f0]'], ['顶标高(m)', '层底标高', ''], ['台阶高度(', '600', 'text-[#0000f0]'],
            ['踏步个数', '4', ''], ['踏步高度(', '150', 'text-[#888]'], ['备注', '', 'text-[#0000f0]']
        ];
        document.getElementById('props').innerHTML = props.map(([k, v, c], i) => `<tr class="h-[26px] border-b border-[#c0c0c0]">
            <td class="pl-[25px] border-r border-[#c0c0c0] overflow-hidden ${c}">${label(k)}</td>
            <td class="pl-0.5 border-r border-[#c0c0c0] overflow-hidden ${i ? '' : 'bg-[#deeeff]'} ${k == '踏步高度(' ? 'text-[#888]' : ''}">${label(v)}</td>
            <td class="pl-[3px] border-r border-[#c0c0c0]">${i ? `<input type="checkbox" aria-label="${k}附加" class="block appearance-none size-4 border border-[#333] bg-white">` : ''}</td></tr>`).join('') +
            ['计算属性', '显示样式'].map(k => `<tr class="h-6 border-b border-[#c0c0c0]">
            <td class="border-r border-[#c0c0c0]"><div class="flex items-center pl-0.5"><button aria-label="展开${k}" class="size-4 mr-[7px] flex items-center justify-center border border-[#c0c0c0]"><svg class="size-[9px]" viewBox="0 0 9 9"><path d="M0 4.500h9M4.500 0v9" stroke="#000"/></svg></button>${k}</div></td>
            <td class="border-r border-[#c0c0c0]"></td><td class="border-r border-[#c0c0c0]"></td></tr>`).join('');

        // 轴网平面图
        const xs = { W: 594, Q: 620, 1: 665, 2: 759, 3: 854, 4: 949, 5: 1055, 6: 1161, 7: 1268, 8: 1363, 9: 1457, 10: 1552, S: 1568 };
        const ys = { T: 303, H: 316, G: 378, F: 414, E: 451, D: 493, C: 564, B: 643, A: 666, M: 773 };
        let g = '';
        const seg = (x1, y1, x2, y2, c, w = 1) => {
            const o = w % 2 ? 0.5 : 0;
            g += `<path d="M${x1 + o} ${y1 + o}L${x2 + o} ${y2 + o}" stroke="${c}" stroke-width="${w}"/>`;
        };
        const box = (x, y, w, h) => { g += `<rect x="${x}" y="${y}" width="${w}" height="${h}" fill="#8000ff"/>`; };
        const GREEN = '#008000', RED = '#f00000', DARK = '#800010', WALL = '#ff8080', BLUE = '#5878e8', EDGE = '#ff4040';

        box(665, 411, 284, 232);
        box(949, 303, 319, 363);
        box(1268, 411, 302, 232);

        // 墙: 起点, 终点, 线宽
        const walls = [
            [665, 411, 949, 411, 3], [665, 497, 949, 497, 2], [665, 561, 855, 561, 3],
            [712, 411, 712, 497, 3], [761, 411, 761, 497, 2], [807, 411, 807, 643, 3], [856, 411, 856, 452, 2], [872, 411, 872, 451, 3],
            [907, 411, 907, 473, 2], [896, 454, 896, 497, 2], [855, 452, 907, 452, 2], [896, 473, 907, 473, 2],
            [712, 562, 712, 643, 3], [760, 562, 760, 643, 2], [856, 562, 856, 643, 2],
            [1268, 411, 1552, 411, 3], [1268, 497, 1552, 497, 2], [1268, 561, 1552, 561, 3],
            [1312, 411, 1312, 473, 2], [1321, 454, 1321, 497, 2], [1345, 411, 1345, 452, 2], [1364, 411, 1364, 452, 2], [1388, 411, 1388, 497, 3],
            [1420, 411, 1420, 497, 2], [1458, 411, 1458, 497, 2], [1505, 411, 1505, 497, 2], [1553, 411, 1553, 643, 2],
            [1312, 452, 1364, 452, 2], [1312, 473, 1321, 473, 2], [1388, 437, 1420, 437, 3], [1388, 469, 1420, 469, 3], [1420, 455, 1458, 455, 2],
            [1316, 562, 1316, 643, 2], [1364, 562, 1364, 643, 2], [1410, 562, 1410, 643, 2], [1457, 562, 1457, 643, 2], [1505, 562, 1505, 643, 2],
            [1161, 626, 1268, 626, 3]
        ];
        walls.forEach(([x1, y1, x2, y2, w]) => seg(x1, y1, x2, y2, WALL, w));
        seg(949, 316, 1268, 316, WALL, 4);
        seg(949, 469, 1268, 469, WALL, 3);
        seg(949, 302, 1268, 302, BLUE);
        seg(1552, 412, 1570, 412, BLUE, 2);
        seg(1569, 412, 1569, 643, BLUE);
        seg(1553, 642, 1569, 642, BLUE, 2);
        seg(1055, 627, 1161, 627, '#a080ff', 2);
        seg(1056, 627, 1056, 666, '#a080ff', 2);
        seg(1162, 627, 1162, 666, '#a060e0', 2);
        [[665, 411, 665, 643], [665, 642, 949, 642], [949, 302, 949, 497], [949, 643, 949, 666], [949, 666, 1268, 666], [1268, 303, 1268, 666], [1268, 642, 1553, 642]].forEach(w => seg(...w, EDGE, 2));

        // 轴线
        [453, 603].forEach(y => seg(594, y, 1568, y, DARK));
        [905, 1001, 1215].forEach(x => seg(x, 303, x, 773, DARK));
        Object.values(ys).forEach(y => seg(594, y, 1568, y, RED));
        Object.values(xs).forEach(x => seg(x, 303, x, 773, RED));
        Object.values(xs).forEach(x => { seg(x, 243, x, 302, GREEN); seg(x, 774, x, 833, GREEN); });
        Object.values(ys).forEach(y => { seg(535, y, 593, y, GREEN); seg(1569, y, 1627, y, GREEN); });

        // 尺寸线
        [263, 283, 793, 812].forEach(y => seg(594, y, 1568, y, GREEN));
        [554, 574, 1588, 1608].forEach(x => seg(x, 303, x, 773, GREEN));
        [289, 785].forEach(y => [[905, 949], [1001, 1055], [1161, 1215]].forEach(([a, b]) => {
            seg(a, y, b, y, GREEN);
            seg(a - 3, y + 3, a + 3, y - 3, GREEN);
            seg(b - 3, y + 3, b + 3, y - 3, GREEN);
        }));
        Object.values(xs).forEach(x => [283, 793].forEach(y => seg(x - 3, y + 3, x + 3, y - 3, GREEN)));
        [594, 1568].forEach(x => [263, 812].forEach(y => seg(x - 3, y + 3, x + 3, y - 3, GREEN)));
        Object.values(ys).forEach(y => [574, 1588].forEach(x => seg(x - 3, y - 3, x + 3, y + 3, GREEN)));
        [303, 773].forEach(y => [554, 1608].forEach(x => seg(x - 3, y - 3, x + 3, y + 3, GREEN)));

        // 轴号
        const bubble = (x, y, t) => {
            let p = '';
            for (let i = 0; i < 12; i++) p += `${(x + 16 * Math.sin(i * Math.PI / 6)).toFixed(1)},${(y - 16 * Math.cos(i * Math.PI / 6)).toFixed(1)} `;
            g += `<polygon points="${p}" fill="none" stroke="${GREEN}"/><text x="${x + 1}" y="${y + 6}" text-anchor="middle" font-size="18" fill="#e0e0e0">${t}</text>`;
        };
        for (const k in xs) { bubble(xs[k], 227, k); bubble(xs[k], 849, k); }
        for (const k in ys) { bubble(518, ys[k], k); bubble(1643, ys[k], k == 'T' ? 'J' : k); }

        // 尺寸数字
        const dim = (x, y, t) => { g += `<text x="${x}" y="${y}" font-size="19" fill="#d8d8d8">${t}</text>`; };
        const vdim = (x, y, t) => { g += `<text transform="translate(${x} ${y}) rotate(-90)" font-size="19" fill="#d8d8d8">${t}</text>`; };
        [[589, 2000], [625, 3400], [695, 7200], [790, 7200], [884, 7200], [984, 8100], [1090, 8100], [1197, 8100], [1298, 7200], [1393, 7200], [1487, 7200], [1542, 1200]]
            .forEach(([x, t]) => { dim(x, 287, t); dim(x, 801, t); });
        [[909, 3300], [1010, 4050], [1170, 4050]].forEach(([x, t]) => { dim(x, 295, t); dim(x, 792, t); });
        dim(1059, 267, 74100);
        dim(1059, 820, 74100);
        [[327, 1000], [365, 4800], [415, 2700], [448, 2800], [490, 3200], [547, 5400], [622, 6000], [673, 1800], [738, 8100]]
            .forEach(([y, t]) => { vdim(578, y, t); vdim(1595, y, t); });
        [[466, 200], [602, 3000]].forEach(([y, t]) => { vdim(587, y, t); vdim(1587, y, t); });
        vdim(558, 560, 35800);
        vdim(1615, 560, 35800);

        // 坐标轴
        g += `<path d="M555 840V790" stroke="#00ff00" stroke-width="5"/><path d="M555 778l5 15h-10z" fill="#00ff00"/>
            <path d="M555 840h48" stroke="#ff0000" stroke-width="5"/><path d="M617 840l-15 6v-12z" fill="#ff0000"/>
            <circle cx="555" cy="840" r="5" fill="#0080ff"/>
            <text x="566" y="794" font-size="18" fill="#00d000">Y</text>
            <text x="601" y="826" font-size="18" fill="#e00000">X</text>
            <text x="537" y="846" font-size="18" fill="#1878e8">Z</text>`;
        document.getElementById('plan').innerHTML = g;
    </script>
</body>

</html>
